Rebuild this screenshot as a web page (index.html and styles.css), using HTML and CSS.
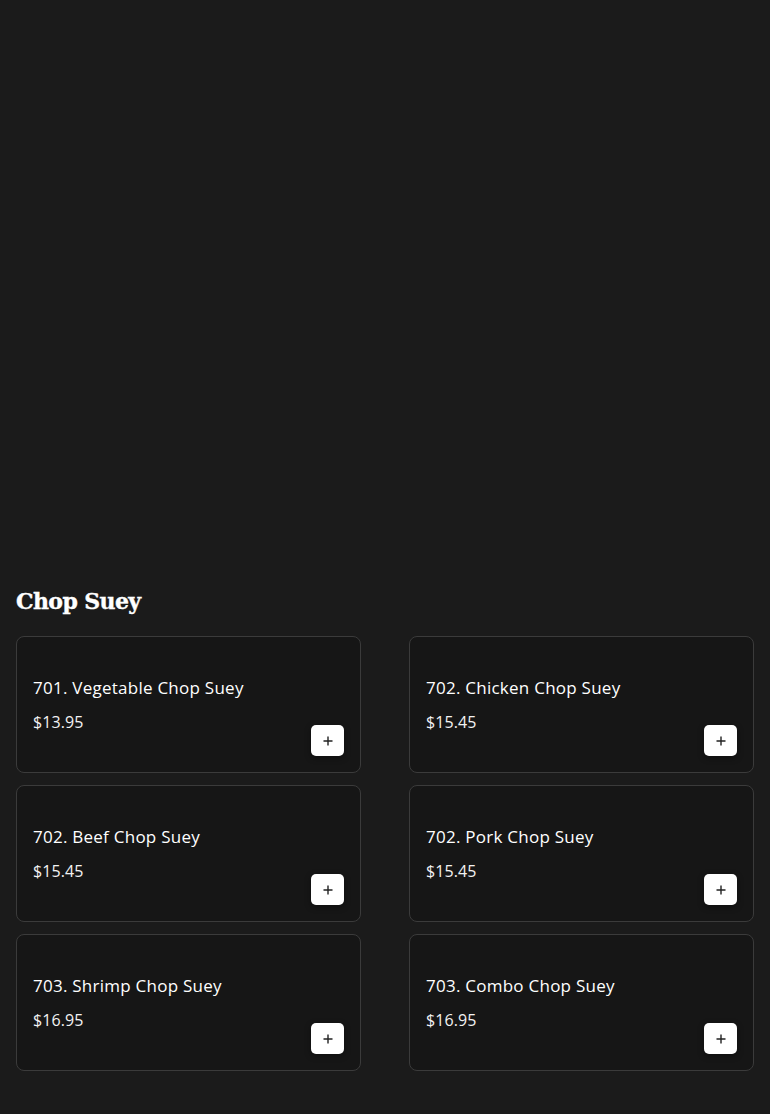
FILE: index.html
```html
<!DOCTYPE html>
<html lang="en">
<head>
<meta charset="utf-8">
<title>Chop Suey</title>
<link rel="stylesheet" href="styles.css">
</head>
<body>
<div class="hero"></div>
<section class="category">
  <h2 class="category-title">Chop Suey</h2>
  <div class="grid">
    <div class="card">
      <div class="card-name">701. Vegetable Chop Suey</div>
      <div class="card-row">
        <div class="card-price">$13.95</div>
        <button class="add-btn" aria-label="Add"><svg viewBox="0 0 12 12" width="12" height="12"><path d="M6 1.5v9M1.5 6h9" stroke="#222" stroke-width="1.4" fill="none"/></svg></button>
      </div>
    </div>
    <div class="card">
      <div class="card-name">702. Chicken Chop Suey</div>
      <div class="card-row">
        <div class="card-price">$15.45</div>
        <button class="add-btn" aria-label="Add"><svg viewBox="0 0 12 12" width="12" height="12"><path d="M6 1.5v9M1.5 6h9" stroke="#222" stroke-width="1.4" fill="none"/></svg></button>
      </div>
    </div>
    <div class="card">
      <div class="card-name">702. Beef Chop Suey</div>
      <div class="card-row">
        <div class="card-price">$15.45</div>
        <button class="add-btn" aria-label="Add"><svg viewBox="0 0 12 12" width="12" height="12"><path d="M6 1.5v9M1.5 6h9" stroke="#222" stroke-width="1.4" fill="none"/></svg></button>
      </div>
    </div>
    <div class="card">
      <div class="card-name">702. Pork Chop Suey</div>
      <div class="card-row">
        <div class="card-price">$15.45</div>
        <button class="add-btn" aria-label="Add"><svg viewBox="0 0 12 12" width="12" height="12"><path d="M6 1.5v9M1.5 6h9" stroke="#222" stroke-width="1.4" fill="none"/></svg></button>
      </div>
    </div>
    <div class="card">
      <div class="card-name">703. Shrimp Chop Suey</div>
      <div class="card-row">
        <div class="card-price">$16.95</div>
        <button class="add-btn" aria-label="Add"><svg viewBox="0 0 12 12" width="12" height="12"><path d="M6 1.5v9M1.5 6h9" stroke="#222" stroke-width="1.4" fill="none"/></svg></button>
      </div>
    </div>
    <div class="card">
      <div class="card-name">703. Combo Chop Suey</div>
      <div class="card-row">
        <div class="card-price">$16.95</div>
        <button class="add-btn" aria-label="Add"><svg viewBox="0 0 12 12" width="12" height="12"><path d="M6 1.5v9M1.5 6h9" stroke="#222" stroke-width="1.4" fill="none"/></svg></button>
      </div>
    </div>
  </div>
</section>
</body>
</html>
```

FILE: styles.css
```css
html, body {
  margin: 0;
  padding: 0;
  background: #1b1b1b;
  color: #ffffff;
  font-family: "Open Sans", "Liberation Sans", sans-serif;
}

.hero {
  height: 580px;
}

.category {
  padding: 0 16px 43px;
}

.category-title {
  margin: 3px 0 17px;
  font-family: "DejaVu Serif", "Liberation Serif", serif;
  font-weight: 700;
  font-size: 22px;
  line-height: 36px;
  letter-spacing: -0.6px;
  color: #ffffff;
  -webkit-text-stroke: 0.4px #ffffff;
}

.grid {
  display: grid;
  grid-template-columns: 1fr 1fr;
  column-gap: 48px;
  row-gap: 12px;
}

.card {
  background: #161616;
  border: 1px solid #3b3b3b;
  border-radius: 8px;
  padding: 16px;
  display: flex;
  flex-direction: column;
}

.card-name {
  margin-top: 23px;
  font-size: 17px;
  font-weight: 500;
  line-height: 24px;
  letter-spacing: 0.25px;
  color: #ffffff;
}

.card-row {
  margin-top: 10px;
  display: flex;
  justify-content: space-between;
  align-items: flex-start;
}

.card-price {
  font-size: 16px;
  font-weight: 400;
  line-height: 24px;
  letter-spacing: 0.1px;
  color: #f2f2f2;
}

.add-btn {
  margin-top: 15px;
  width: 33px;
  height: 31px;
  padding: 0;
  border: none;
  border-radius: 5px;
  background: #ffffff;
  display: flex;
  align-items: center;
  justify-content: center;
  cursor: pointer;
  box-shadow: 0 2px 6px rgba(0, 0, 0, 0.4);
}

.add-btn svg {
  display: block;
}
```
